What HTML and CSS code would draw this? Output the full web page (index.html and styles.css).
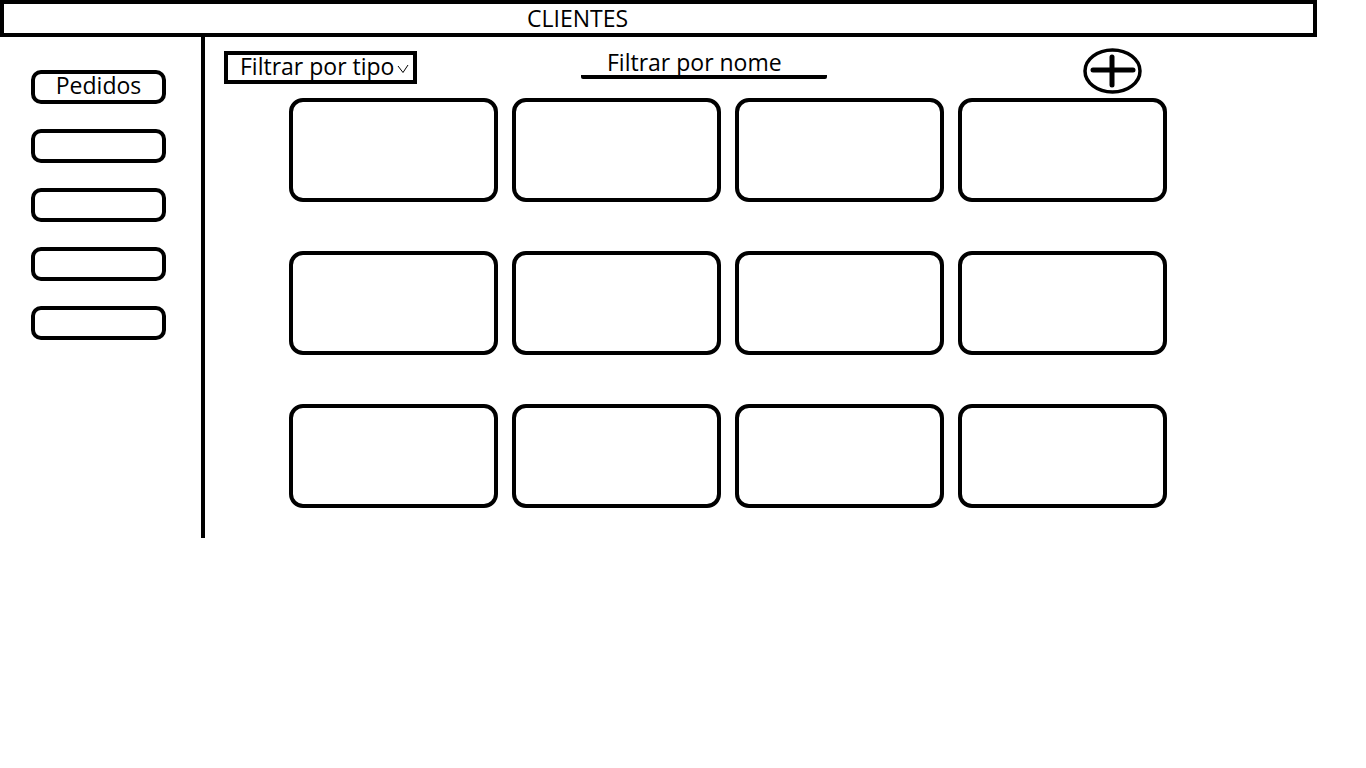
FILE: index.html
```html
<!DOCTYPE html>
<html lang="pt">
<head>
<meta charset="utf-8">
<title>Clientes</title>
<link rel="stylesheet" href="styles.css">
</head>
<body>
<header class="topbar"><span class="title">CLIENTES</span></header>
<div class="layout">
  <nav class="sidebar">
    <div class="nav-btn">Pedidos</div>
    <div class="nav-btn"></div>
    <div class="nav-btn"></div>
    <div class="nav-btn"></div>
    <div class="nav-btn"></div>
  </nav>
  <main class="main">
    <div class="toolbar">
      <div class="type-select">
        <span>Filtrar por tipo</span>
        <svg class="chev" width="12" height="9" viewBox="0 0 12 9"><polyline points="1,2 6,8.5 11,1" fill="none" stroke="#000" stroke-width="1"/></svg>
      </div>
      <div class="name-filter"><span>Filtrar por nome</span></div>
      <svg class="add" width="60" height="46" viewBox="0 0 60 46">
        <ellipse cx="29.5" cy="23" rx="27.5" ry="21" fill="none" stroke="#000" stroke-width="3.5"/>
        <line x1="10" y1="22" x2="50" y2="22" stroke="#000" stroke-width="5" stroke-linecap="round"/>
        <line x1="29" y1="9" x2="29" y2="37" stroke="#000" stroke-width="5" stroke-linecap="round"/>
      </svg>
    </div>
    <div class="grid">
      <div class="card"></div><div class="card"></div><div class="card"></div><div class="card"></div>
      <div class="card"></div><div class="card"></div><div class="card"></div><div class="card"></div>
      <div class="card"></div><div class="card"></div><div class="card"></div><div class="card"></div>
    </div>
  </main>
</div>
</body>
</html>
```
FILE: styles.css
```css
* { box-sizing: border-box; }
html, body { margin: 0; padding: 0; background: #fff; }
body {
  font-family: "Open Sans", "DejaVu Sans", sans-serif;
  font-size: 23px;
  color: #000;
  width: 1366px;
  height: 768px;
  overflow: hidden;
}
.topbar {
  width: 1317px;
  height: 37px;
  border: 4px solid #000;
  padding: 3px 0 0 523px;
  line-height: 22px;
}
.layout {
  display: flex;
  align-items: flex-start;
}
.sidebar {
  width: 205px;
  height: 501px;
  border-right: 4px solid #000;
  padding: 33px 0 0 31px;
  display: flex;
  flex-direction: column;
  gap: 25px;
}
.nav-btn {
  width: 135px;
  height: 34px;
  border: 4px solid #000;
  border-radius: 10px;
  text-align: center;
  line-height: 22px;
}
.main {
  padding: 14px 0 0 19px;
}
.toolbar {
  display: flex;
  align-items: flex-start;
  height: 47px;
}
.type-select {
  width: 193px;
  height: 33px;
  border: 4px solid #000;
  padding: 0 0 3px 12px;
  line-height: 22px;
  display: flex;
  align-items: center;
  gap: 3px;
}
.chev { margin-top: 5px; }
.name-filter {
  margin-left: 164px;
  margin-top: -2px;
  width: 246px;
  padding-left: 26px;
  line-height: 26px;
  border-bottom: 4px solid #000;
  border-radius: 0 0 2px 2px;
}
.add {
  margin-left: 256px;
  margin-top: -3px;
}
.grid {
  margin-left: 65px;
  display: grid;
  grid-template-columns: repeat(4, 209px);
  grid-auto-rows: 104px;
  column-gap: 14px;
  row-gap: 49px;
}
.card {
  border: 4px solid #000;
  border-radius: 14px;
}
```
